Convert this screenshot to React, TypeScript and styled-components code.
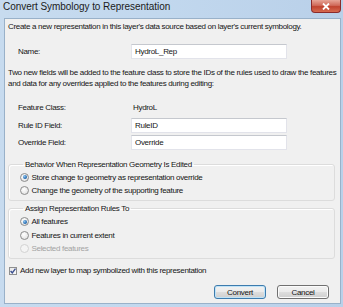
import styled, { createGlobalStyle } from "styled-components";

const GlobalStyle = createGlobalStyle`
  html, body {
    margin: 0;
    padding: 0;
    background: #bcd3ea;
  }
  body {
    font-family: "Liberation Sans", Arial, sans-serif;
  }
`;

const Window = styled.div`
  width: 343px;
  height: 307px;
  box-sizing: border-box;
  padding: 0 2px 3px 4px;
  display: flex;
  flex-direction: column;
  overflow: hidden;
  background: linear-gradient(90deg, #c7dbef 0%, #c2d8ee 45%, #b9d0e9 100%);
`;

const TitleBar = styled.div`
  height: 18px;
  flex: none;
  display: flex;
  align-items: flex-start;
  justify-content: space-between;
`;

const Title = styled.div`
  margin-left: -1px;
  font-size: 10px;
  line-height: 13px;
  letter-spacing: -0.05px;
  color: #1b1b1b;
`;

const CloseButton = styled.div`
  width: 30px;
  height: 13px;
  display: flex;
  align-items: center;
  justify-content: center;
  border: 1px solid #8b2b2b;
  border-top: none;
  border-radius: 0 0 4px 4px;
  box-sizing: border-box;
  background: linear-gradient(180deg, #e7a597 0%, #d06a5a 45%, #c0432f 55%, #d66a50 100%);
`;

const Client = styled.div`
  flex: 1;
  display: flex;
  flex-direction: column;
  background: #f0f0f0;
  border: 1px solid #99b1c9;
  font-size: 8px;
  line-height: 11px;
  letter-spacing: -0.32px;
  color: #151515;
  padding-top: 2px;
  white-space: nowrap;
`;

const Text = styled.div<{ $top?: number }>`
  padding-left: 3px;
  margin-top: ${(p) => p.$top ?? 0}px;
`;

const Fields = styled.div<{ $top: number }>`
  display: flex;
  flex-direction: column;
  gap: 2.5px;
  margin-top: ${(p) => p.$top}px;
`;

const FieldRow = styled.div`
  display: grid;
  grid-template-columns: 113px 156px;
  align-items: center;
  height: 15px;
  padding-left: 13px;
`;

const FieldValue = styled.span`
  padding-left: 2px;
`;

const TextBox = styled.input`
  box-sizing: border-box;
  width: 156px;
  height: 15px;
  margin: 0;
  padding: 0 3px;
  border: 1px solid #e2e3ea;
  border-top-color: #c5c8ce;
  background: #fff;
  font-family: "Liberation Sans", Arial, sans-serif;
  font-size: 8px;
  letter-spacing: -0.3px;
  color: #151515;
  outline: none;
`;

const Group = styled.fieldset<{ $top: number }>`
  margin: ${(p) => p.$top}px 5px 0 3px;
  padding: 1px 0 3px 11px;
  border: 1px solid #dcdcdc;
  border-radius: 3px;
  box-shadow: inset 1px 1px 0 #fff;
  min-width: 0;
`;

const Legend = styled.legend`
  margin-left: 3px;
  padding: 0 2px;
  font-size: 8px;
  line-height: 11px;
`;

const OptionRow = styled.div<{ $disabled?: boolean }>`
  display: flex;
  align-items: center;
  gap: 2.5px;
  height: 13.4px;
  color: ${(p) => (p.$disabled ? "#a3a3a3" : "#151515")};
`;

const RadioCircle = styled.span<{ $checked?: boolean; $disabled?: boolean }>`
  width: 9px;
  height: 9px;
  box-sizing: border-box;
  border-radius: 50%;
  border: 1px solid ${(p) => (p.$disabled ? "#d2d2d2" : "#8d8d8d")};
  background: ${(p) =>
    p.$disabled
      ? "#f4f4f4"
      : "radial-gradient(circle at 40% 35%, #ffffff 0%, #e6e6e6 70%, #d5d5d5 100%)"};
  display: flex;
  align-items: center;
  justify-content: center;
  flex: none;

  &::after {
    content: "";
    display: ${(p) => (p.$checked ? "block" : "none")};
    width: 4px;
    height: 4px;
    border-radius: 50%;
    background: radial-gradient(circle at 35% 35%, #8cc4f0 0%, #2a6fb4 60%, #124a86 100%);
  }
`;

const CheckRow = styled.div`
  display: flex;
  align-items: center;
  gap: 3px;
  padding-left: 4px;
  margin-top: 6px;
  height: 11px;
`;

const CheckBox = styled.span`
  width: 8px;
  height: 8px;
  box-sizing: border-box;
  border: 1px solid #8e8f8f;
  background: linear-gradient(135deg, #e8e8e8 0%, #fafafa 100%);
  display: flex;
  align-items: center;
  justify-content: center;
  flex: none;
`;

const ButtonRow = styled.div`
  display: flex;
  justify-content: flex-end;
  gap: 11px;
  padding-right: 11px;
  margin-top: 9px;
`;

const Button = styled.div<{ $default?: boolean }>`
  width: 52px;
  height: 14px;
  box-sizing: border-box;
  display: flex;
  align-items: center;
  justify-content: center;
  border: 1px solid ${(p) => (p.$default ? "#3d7bad" : "#707070")};
  border-radius: 3px;
  background: linear-gradient(180deg, #f2f2f2 0%, #ebebeb 48%, #dddddd 52%, #cfcfcf 100%);
  box-shadow: inset 0 0 0 1px ${(p) => (p.$default ? "#bfe3f8" : "#fbfbfb")};
  color: #151515;
`;

function Radio({ label, checked, disabled }: { label: string; checked?: boolean; disabled?: boolean }) {
  return (
    <OptionRow $disabled={disabled}>
      <RadioCircle $checked={checked} $disabled={disabled} />
      {label}
    </OptionRow>
  );
}

export default function App() {
  return (
    <>
      <GlobalStyle />
      <Window>
        <TitleBar>
          <Title>Convert Symbology to Representation</Title>
          <CloseButton>
            <svg width="8" height="7" viewBox="0 0 8 7">
              <path d="M1 0.5 L7 6.5 M7 0.5 L1 6.5" stroke="#fff" strokeWidth="1.8" />
            </svg>
          </CloseButton>
        </TitleBar>
        <Client>
          <Text>Create a new representation in this layer's data source based on layer's current symbology.</Text>
          <Fields $top={11.5}>
            <FieldRow>
              <span>Name:</span>
              <TextBox readOnly value="HydroL_Rep" />
            </FieldRow>
          </Fields>
          <Text $top={8.5}>
            Two new fields will be added to the feature class to store the IDs of the rules used to draw the features
            <br />
            and data for any overrides applied to the features during editing:
          </Text>
          <Fields $top={11}>
            <FieldRow>
              <span>Feature Class:</span>
              <FieldValue>HydroL</FieldValue>
            </FieldRow>
            <FieldRow>
              <span>Rule ID Field:</span>
              <TextBox readOnly value="RuleID" />
            </FieldRow>
            <FieldRow>
              <span>Override Field:</span>
              <TextBox readOnly value="Override" />
            </FieldRow>
          </Fields>
          <Group $top={8.5}>
            <Legend>Behavior When Representation Geometry Is Edited</Legend>
            <Radio label="Store change to geometry as representation override" checked />
            <Radio label="Change the geometry of the supporting feature" />
          </Group>
          <Group $top={2}>
            <Legend>Assign Representation Rules To</Legend>
            <Radio label="All features" checked />
            <Radio label="Features in current extent" />
            <Radio label="Selected features" disabled />
          </Group>
          <CheckRow>
            <CheckBox>
              <svg width="6" height="6" viewBox="0 0 6 6">
                <path d="M0.6 3 L2.3 4.8 L5.5 0.6" fill="none" stroke="#3b4f8f" strokeWidth="1.4" />
              </svg>
            </CheckBox>
            Add new layer to map symbolized with this representation
          </CheckRow>
          <ButtonRow>
            <Button $default>Convert</Button>
            <Button>Cancel</Button>
          </ButtonRow>
        </Client>
      </Window>
    </>
  );
}
